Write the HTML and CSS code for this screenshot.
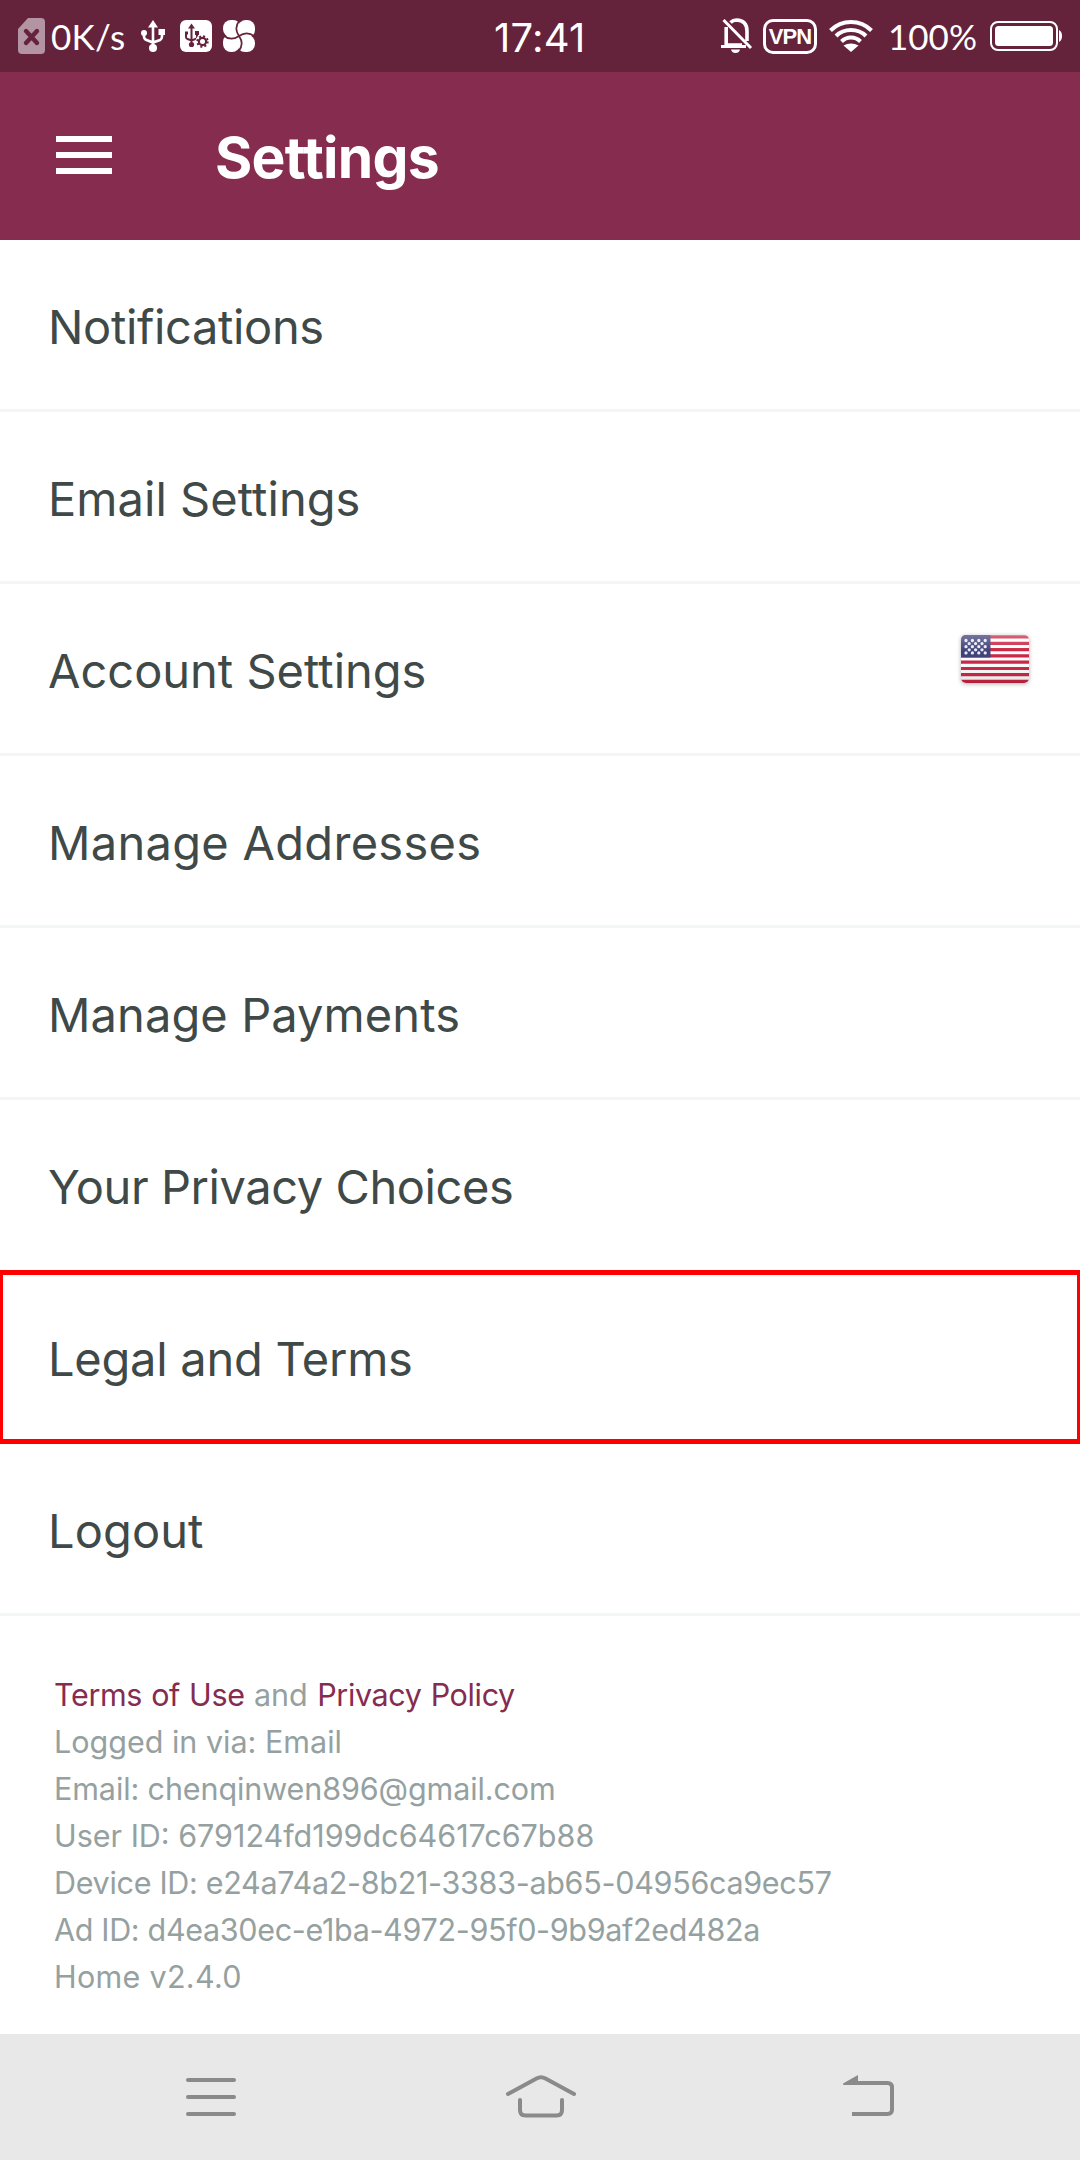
FILE: index.html
```html
<!DOCTYPE html>
<html lang="en">
<head>
<meta charset="utf-8">
<title>Settings</title>
<link rel="stylesheet" href="styles.css">
</head>
<body>
<div class="status-bar">
  <div class="status-left">
    <svg class="sim" width="27" height="36" viewBox="0 0 27 36"><path d="M10 0H23a4 4 0 0 1 4 4V32a4 4 0 0 1-4 4H4a4 4 0 0 1-4-4V11z" fill="#b394a2"/><path d="M8 13l11 12M19 13L8 25" stroke="#65223b" stroke-width="4.4" stroke-linecap="round"/></svg>
    <span class="rate">0K/s</span>
    <svg class="usb" width="24" height="32" viewBox="0 0 24 32" fill="none" stroke="#fff" stroke-width="2.6"><path d="M12 5V28M3 13v3.5q0 2.5 2.5 3.5L12 22.500l7-2.500q2-1 2-3.500V13"/><path d="M12 0l5 7.500H7z" fill="#fff" stroke="none"/><circle cx="12" cy="28" r="4" fill="#fff" stroke="none"/><circle cx="3" cy="13" r="3" fill="#fff" stroke="none"/><path d="M17.500 9H24v6h-6.500z" fill="#fff" stroke="none"/></svg>
    <svg class="usb-settings" width="32" height="32" viewBox="0 0 32 32"><rect width="32" height="32" rx="6" fill="#fff"/><g fill="none" stroke="#65223b" stroke-width="2"><path d="M11.500 6V24M6 13v4q0 1.500 1.500 2l4 1.500 4-1.500q1.500-.5 1.500-2V13"/><path d="M11.500 3.500l3.500 5H8zM15 11h4v4h-4zM5 11.500h3v3H5z" fill="#65223b" stroke="none"/><circle cx="11.500" cy="24.500" r="2.600" fill="#65223b" stroke="none"/><circle cx="22.500" cy="21.500" r="7" fill="#fff" stroke="none"/><circle cx="22.500" cy="21.500" r="3.600" stroke-width="2.200"/><circle cx="22.500" cy="21.500" r="5.200" stroke-width="2" stroke-dasharray="2 2.080"/></g></svg>
    <svg class="pinwheel" width="32" height="32" viewBox="0 0 32 32"><g fill="#fff"><rect x="0" y="0" width="18" height="17" rx="8"/><rect x="15" y="0" width="17" height="18" rx="8"/><rect x="14" y="15" width="18" height="17" rx="8"/><rect x="0" y="14" width="17" height="18" rx="8"/><rect x="9" y="9" width="14" height="14"/></g><path d="M16 16C12.500 11 12.500 5 17 0M16 16C21 12.500 27 12.500 32 17M16 16C19.500 21 19.500 27 15 32M16 16C11 19.500 5 19.500 0 15" fill="none" stroke="#65223b" stroke-width="1.700"/></svg>
  </div>
  <span class="clock">17:41</span>
  <div class="status-right">
    <svg class="bell" width="32" height="36" viewBox="0 0 32 36" fill="none" stroke="#fff"><path d="M5.200 9V27H21M9.500 4.500Q12 2 15.500 2Q26 2.500 26 13V23" stroke-width="3.600"/><path d="M0 28.500H25" stroke-width="3"/><path d="M2.500 2L30 30" stroke-width="3"/><path d="M10 31.500h9q-1 3.500-4.500 3.500T10 31.500z" fill="#fff" stroke="none"/></svg>
    <span class="vpn">VPN</span>
    <svg class="wifi" width="44" height="32" viewBox="0 0 44 32" fill="none" stroke="#fff" stroke-width="4"><path d="M1.500 10.500Q10 2 22 2t20.500 8.500M7 16Q13 10 22 10t15 6M12.500 21.500Q16.500 17.500 22 17.500t9.500 4"/><path d="M22 32l-7.500-6.500Q18 23.500 22 23.500t7.500 2z" fill="#fff" stroke="none"/></svg>
    <span class="percent">100%</span>
    <svg class="battery" width="72" height="30" viewBox="0 0 72 30"><rect x="1" y="1" width="66" height="28" rx="7" fill="none" stroke="#fff" stroke-width="2"/><rect x="5" y="5" width="58" height="20" rx="3.500" fill="#fff"/><path d="M69 9q3 1.500 3 6t-3 6z" fill="#fff"/></svg>
  </div>
</div>
<header class="app-bar">
  <svg class="menu" width="56" height="38" viewBox="0 0 56 38" fill="#fff"><path d="M0 0h56v6H0zM0 16h56v6H0zM0 32h56v6H0z"/></svg>
  <h1>Settings</h1>
</header>
<main>
  <ul class="settings">
    <li><span>Notifications</span></li>
    <li><span>Email Settings</span></li>
    <li><span>Account Settings</span>
      <svg class="flag" width="68" height="48" viewBox="0 0 68 48"><defs><clipPath id="flag-shape"><rect width="68" height="48" rx="5"/></clipPath><linearGradient id="shine" x1="0" y1="0" x2="0" y2="1"><stop offset="0" stop-color="#fff" stop-opacity=".28"/><stop offset=".35" stop-color="#fff" stop-opacity="0"/><stop offset="1" stop-color="#000" stop-opacity=".12"/></linearGradient></defs><g clip-path="url(#flag-shape)"><path d="M0 0h68v48H0z" fill="#fff"/><path d="M0 1.800h68M0 8.300h68M0 14.600h68M0 20.900h68M0 27.100h68M0 33.500h68M0 39.700h68M0 46.300h68" stroke="#cb2442" stroke-width="3.200"/><path d="M0 0h29.500v22.500H0z" fill="#3e4079"/><path d="M5 5.500H26M5 11.700H26M5 17.900H26" stroke="#e9e9f3" stroke-width="3.300" stroke-linecap="round" stroke-dasharray="0 6.400"/><path d="M8.200 8.600H23M8.200 14.800H23" stroke="#e9e9f3" stroke-width="3.300" stroke-linecap="round" stroke-dasharray="0 6.400"/><path d="M0 0h68v48H0z" fill="url(#shine)"/></g></svg>
    </li>
    <li><span>Manage Addresses</span></li>
    <li><span>Manage Payments</span></li>
    <li><span>Your Privacy Choices</span></li>
    <li class="selected"><span>Legal and Terms</span></li>
    <li><span>Logout</span></li>
  </ul>
  <div class="about">
    <p><a>Terms of Use</a> and <a>Privacy Policy</a></p>
    <p>Logged in via: Email</p>
    <p>Email: chenqinwen896@gmail.com</p>
    <p>User ID: 679124fd199dc64617c67b88</p>
    <p>Device ID: e24a74a2-8b21-3383-ab65-04956ca9ec57</p>
    <p>Ad ID: d4ea30ec-e1ba-4972-95f0-9b9af2ed482a</p>
    <p>Home v2.4.0</p>
  </div>
</main>
<nav class="nav-bar">
  <svg width="50" height="44" viewBox="0 0 50 44" stroke="#8a8a8a" stroke-width="4" stroke-linecap="round"><path d="M2 5h46M2 22h46M2 39h46"/></svg>
  <svg class="home" width="70" height="44" viewBox="0 0 70 44" fill="none" stroke="#8a8a8a" stroke-width="4" stroke-linecap="round"><path d="M2 19L30.500 3.500Q35 1 39.500 3.500L68 19"/><path d="M14 25V35Q14 40.500 19.500 40.500H50.500Q56 40.500 56 35V25"/></svg>
  <svg width="52" height="44" viewBox="0 0 52 44" fill="none" stroke="#8a8a8a" stroke-width="4"><path d="M4 8H44.500Q49 8 49 12.500V34.500Q49 39 44.500 39H9"/><path d="M0 8.500L15 0V10H1Q0 10 0 8.500z" fill="#8a8a8a" stroke="none"/></svg>
</nav>
</body>
</html>
```
FILE: styles.css
```css
* { box-sizing: border-box; margin: 0; padding: 0; }
body {
  width: 1080px;
  height: 2160px;
  display: flex;
  flex-direction: column;
  background: #fff;
  font-family: Inter, "Open Sans", sans-serif;
  overflow: hidden;
}
svg { display: block; flex: none; }

.status-bar {
  height: 72px;
  flex: none;
  display: grid;
  grid-template-columns: 1fr 110px 1fr;
  align-items: center;
  background: #65223b;
  color: #fff;
  white-space: nowrap;
}
.status-left, .status-right { display: flex; align-items: center; height: 72px; }
.status-left { padding-left: 18px; }
.status-right { justify-content: flex-end; padding-right: 18px; }
.rate, .percent { font-family: Lato, sans-serif; font-size: 35px; line-height: 72px; }
.rate { width: 90px; margin-left: 6px; letter-spacing: .3px; }
.usb-settings { margin-left: 15px; }
.pinwheel { margin-left: 11px; }
.clock { padding: 3px 0 0 9px; font-size: 40px; line-height: 69px; letter-spacing: .2px; }
.vpn {
  width: 54px;
  height: 35px;
  margin: 1px 12px 0 10px;
  border: 3px solid #fff;
  border-radius: 10px;
  font: bold 22px/30px "Liberation Sans", sans-serif;
  letter-spacing: -.9px;
  text-align: center;
}
.percent { width: 102px; margin-left: 15px; }

.app-bar {
  height: 168px;
  flex: none;
  display: flex;
  align-items: center;
  gap: 103px;
  padding-left: 56px;
  background: #852c4f;
  color: #fff;
}
.menu { margin-bottom: 2px; }
h1 { padding-top: 3px; font-size: 57px; font-weight: 700; line-height: 70px; letter-spacing: -.75px; }

main { flex: 1; }
.settings { list-style: none; }
.settings li {
  height: 172px;
  display: flex;
  align-items: center;
  justify-content: space-between;
  padding: 5px 51px 0 48px;
  border-bottom: 3px solid #f2f7f6;
  color: #3f4948;
  font-size: 47px;
  line-height: 60px;
}
.settings li:nth-child(1) { letter-spacing: -.35px; }
.settings li:nth-child(2) { letter-spacing: .05px; }
.settings li:nth-child(4) { letter-spacing: .3px; }
.settings li:nth-child(5) { letter-spacing: .1px; }
.settings li:nth-child(6) { letter-spacing: -.43px; border-bottom-color: transparent; }
.settings li:nth-child(7) { letter-spacing: -.25px; }
.settings li:nth-child(8) { letter-spacing: .1px; }
.settings .selected {
  height: 174px;
  margin-top: -2px;
  padding: 4px 48px 0 45px;
  border: solid #f00;
  border-width: 5px 3px;
}
.flag { margin-bottom: 24px; filter: drop-shadow(0 1px 2px rgba(0, 0, 0, .3)); }

.about {
  padding: 55px 54px 0;
  color: #95a1a0;
  font-size: 30.5px;
  line-height: 47px;
}
.about a { color: #852c4f; letter-spacing: -.35px; }
.about p:nth-child(1) { word-spacing: .8px; }
.about p:nth-child(3) { letter-spacing: -.1px; }
.about p:nth-child(5) { letter-spacing: -.3px; }
.about p:nth-child(6) { letter-spacing: -.33px; }
.about p:nth-child(7) { letter-spacing: .3px; }

.nav-bar {
  height: 126px;
  flex: none;
  display: flex;
  justify-content: space-between;
  padding: 41px 185px 0 186px;
  background: #e8e8e8;
}
.home { margin-left: 2px; }
```
